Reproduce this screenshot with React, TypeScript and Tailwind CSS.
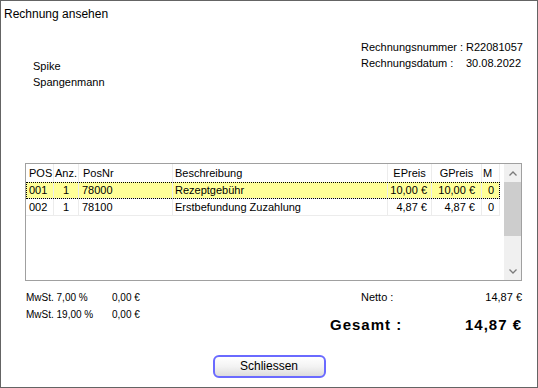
import React from 'react';

// Invoice preview dialog ("Rechnung ansehen")
const columns = [
  { key: 'pos', label: 'POS', width: 'w-[28px]', head: 'pl-[3px]', cell: 'pl-[3px]' },
  { key: 'anz', label: 'Anz.', width: 'w-[25px]', head: 'pl-[1px]', cell: 'text-center' },
  { key: 'posNr', label: 'PosNr', width: 'w-[94px]', head: 'pl-[4px]', cell: 'pl-[3px]' },
  { key: 'text', label: 'Beschreibung', width: 'w-[215px]', head: 'pl-[2px]', cell: 'pl-[2px]' },
  { key: 'ePreis', label: 'EPreis', width: 'w-[44px]', head: 'text-center', cell: 'text-right pr-[4px]' },
  { key: 'gPreis', label: 'GPreis', width: 'w-[50px]', head: 'text-center', cell: 'text-right pr-[6px]' },
  { key: 'm', label: 'M', width: 'w-[18px]', head: 'pl-[1px]', cell: 'text-right pr-[5px]' },
];

type Row = Record<string, string> & { selected?: boolean };

const rows: Row[] = [
  { pos: '001', anz: '1', posNr: '78000', text: 'Rezeptgebühr', ePreis: '10,00 €', gPreis: '10,00 €', m: '0', selected: true } as Row,
  { pos: '002', anz: '1', posNr: '78100', text: 'Erstbefundung Zuzahlung', ePreis: '4,87 €', gPreis: '4,87 €', m: '0' } as Row,
];

function Chevron({ down }: { down?: boolean }) {
  return (
    <svg width="8" height="5" viewBox="0 0 8 5" className={down ? 'rotate-180' : ''}>
      <polyline points="0.5,4.5 4,1 7.5,4.5" fill="none" stroke="#7a7a7a" strokeWidth="1.3" />
    </svg>
  );
}

export default function App() {
  return (
    <div className="w-[538px] h-[388px] border border-[#646464] bg-white flex flex-col text-black font-['Liberation_Sans',Arial,sans-serif]">
      {/* Title */}
      <div className="mt-[5px] pl-[3px] text-[12px] leading-[16px]">Rechnung ansehen</div>

      {/* Customer + invoice info */}
      <div className="mt-[17px] flex items-start text-[11px] leading-[16px]">
        <div className="ml-[32px] mt-[19px] w-[328px]">
          <div>Spike</div>
          <div>Spangenmann</div>
        </div>
        <div className="grid grid-cols-[105px_auto]">
          <div>Rechnungsnummer :</div>
          <div>R22081057</div>
          <div>Rechnungsdatum :</div>
          <div>30.08.2022</div>
        </div>
      </div>

      {/* Positions table */}
      <div className="mt-[73px] ml-[24px] w-[497px] h-[118px] border border-[#a0a0a0] flex text-[11px]">
        <div className="w-[474px] flex flex-col">
          <div className="flex h-[18px] items-center">
            {columns.map((c) => (
              <div key={c.key} className={`${c.width} ${c.head} h-full leading-[18px] border-r border-[#ececec] whitespace-nowrap`}>
                {c.label}
              </div>
            ))}
          </div>
          {rows.map((r) => (
            <div
              key={r.pos}
              className={`flex h-[17px] border-b border-[#ececec] ${r.selected ? 'bg-[#ffff99] outline-1 outline-dotted outline-black -outline-offset-1' : ''}`}
            >
              {columns.map((c) => (
                <div key={c.key} className={`${c.width} ${c.cell} h-full leading-[16px] border-r border-[#ececec] whitespace-nowrap overflow-hidden`}>
                  {r[c.key]}
                </div>
              ))}
            </div>
          ))}
        </div>
        <div className="w-[4px]" />
        <div className="w-[17px] bg-[#f0f0f0] flex flex-col">
          <div className="h-[18px] flex items-center justify-center">
            <Chevron />
          </div>
          <div className="h-[54px] bg-[#cdcdcd]" />
          <div className="flex-1" />
          <div className="h-[17px] flex items-center justify-center">
            <Chevron down />
          </div>
        </div>
      </div>

      {/* Totals */}
      <div className="mt-[8px] flex items-start">
        <div className="ml-[25px] grid grid-cols-[86px_auto] text-[10px] leading-[17px]">
          <div>MwSt. 7,00 %</div>
          <div>0,00 €</div>
          <div>MwSt. 19,00 %</div>
          <div>0,00 €</div>
        </div>
        <div className="ml-auto mr-[15px] w-[192px] flex flex-col">
          <div className="pl-[31px] flex justify-between text-[11px] leading-[17px]">
            <span>Netto :</span>
            <span>14,87 €</span>
          </div>
          <div className="mt-[9px] flex justify-between text-[15px] leading-[20px] font-bold tracking-[1px]">
            <span>Gesamt :</span>
            <span>14,87 €</span>
          </div>
        </div>
      </div>

      {/* Close button */}
      <div className="mt-auto mb-[9px] flex justify-center">
        <button className="w-[113px] h-[23px] rounded-[6px] border-2 border-[#6a6aff] bg-linear-to-b from-white via-[#f3f3f3] to-[#dcdcdc] text-[12px] leading-[19px]">
          Schliessen
        </button>
      </div>
    </div>
  );
}
